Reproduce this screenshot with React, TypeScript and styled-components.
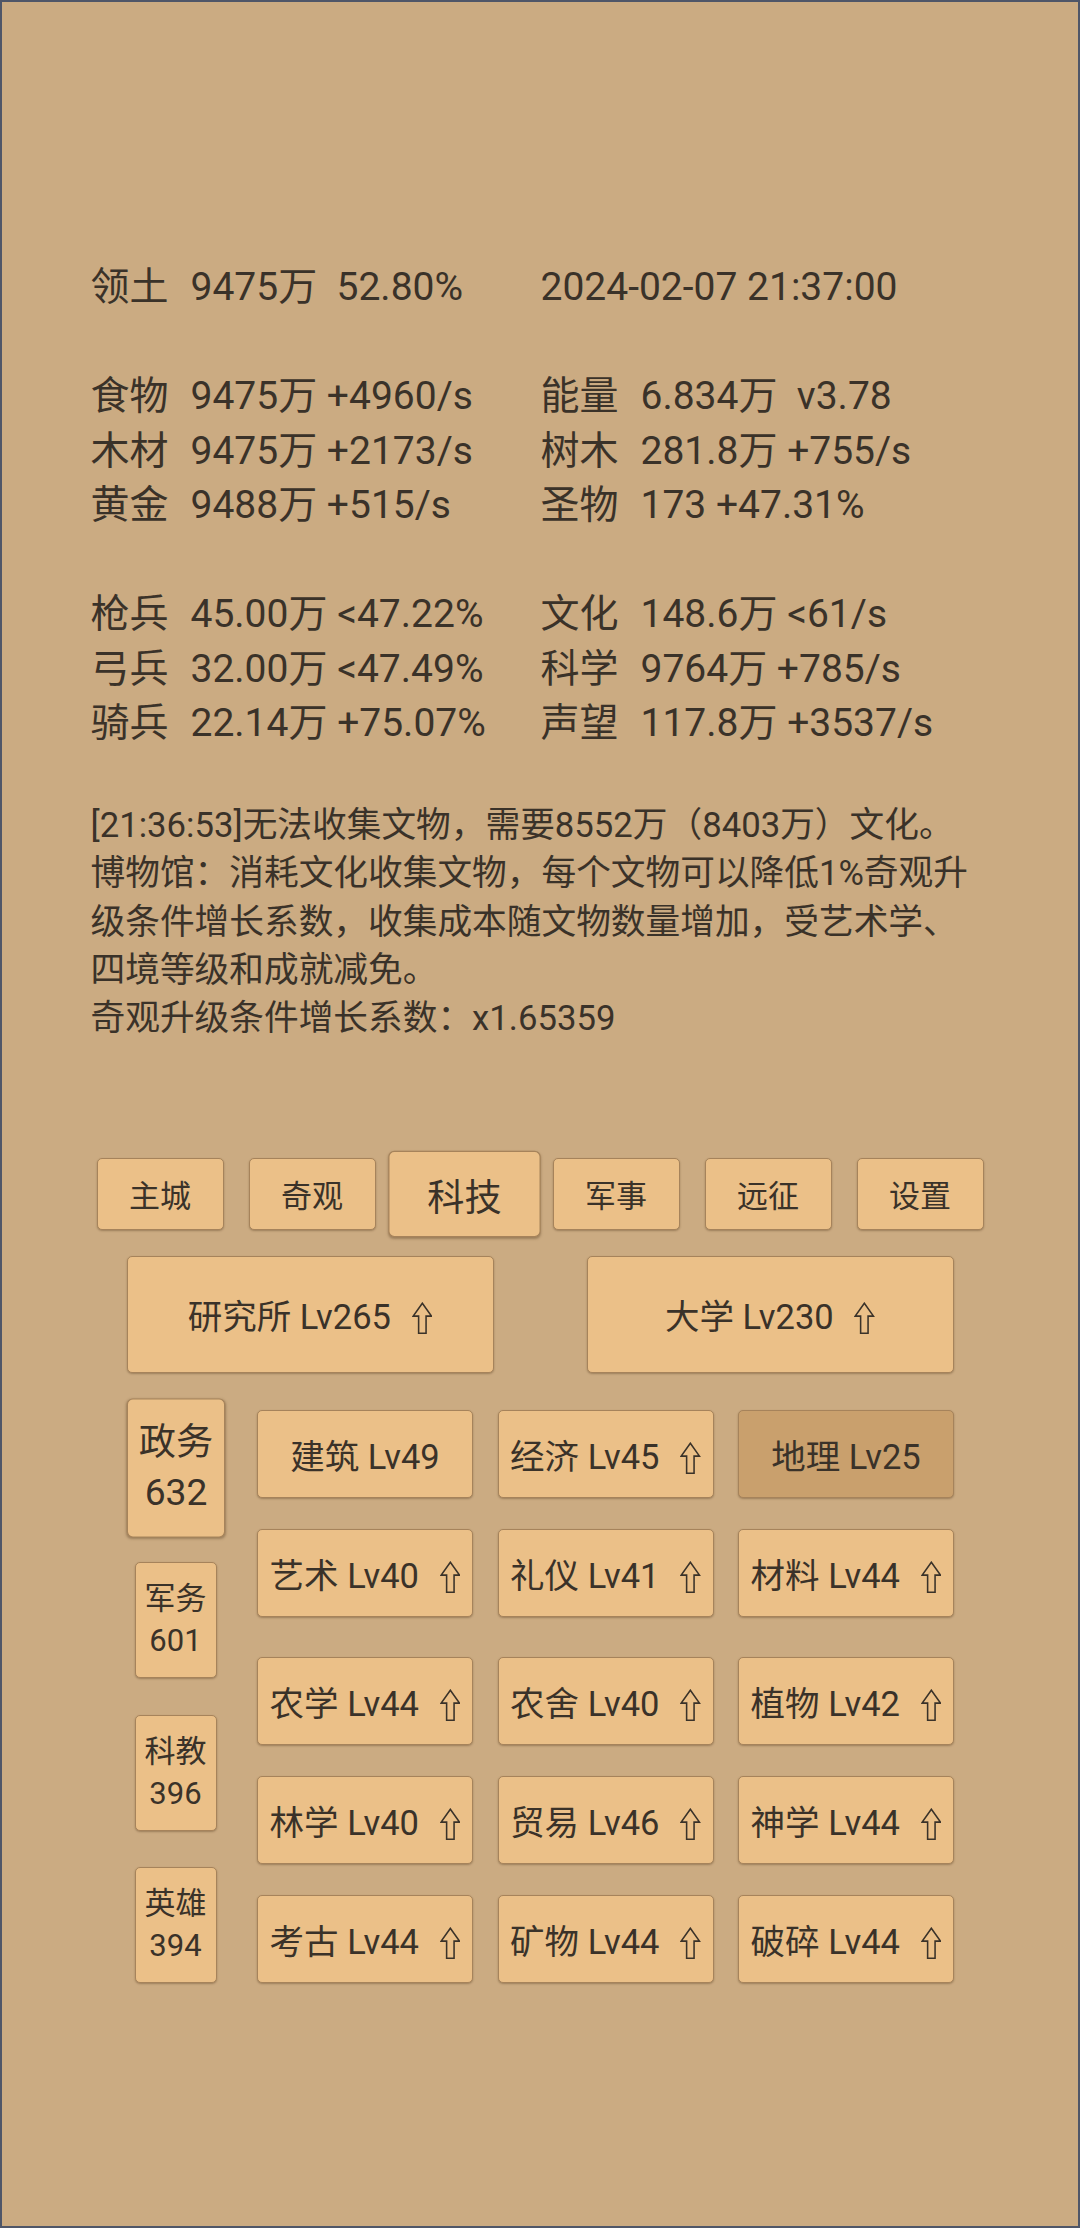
import React from "react";
import styled, { createGlobalStyle, css } from "styled-components";

const Global = createGlobalStyle`
  html, body { margin: 0; padding: 0; background: #cbab82; }
  body {
    font-family: Roboto, "Noto Sans CJK SC", sans-serif;
    color: #3a3229;
  }
  * { box-sizing: border-box; }
`;

const Page = styled.div`
  width: 1080px;
  height: 2228px;
  border: 2px solid #4f5668;
  background: #cbab82;
  padding-top: 258px;
  display: flex;
  flex-direction: column;
  overflow: hidden;
`;

const Stats = styled.div`
  padding-left: 88.5px;
  font-size: 39px;
  line-height: 54.5px;
`;

const StatLine = styled.div`
  display: grid;
  grid-template-columns: 450px auto;
  height: 54.5px;
  white-space: pre;
`;

const Cell = styled.div`
  display: flex;
`;

const StatLabel = styled.span`
  width: 100px;
  flex: none;
`;

const StatValue = styled.span``;

const Log = styled.div`
  margin-top: 50.5px;
  padding-left: 88.5px;
  width: 980px;
  font-size: 34.7px;
  line-height: 48.3px;
`;

const LogLine = styled.div``;

const buttonBase = css`
  background: #ebc088;
  border: 1px solid #a6835b;
  border-radius: 5px;
  box-shadow: 0 1px 2px rgba(70, 45, 20, 0.35);
  font-family: inherit;
  color: #3a3229;
  padding: 0;
  display: flex;
  align-items: center;
  justify-content: center;
  flex: none;
`;

const Nav = styled.div`
  margin-top: 115.5px;
  display: flex;
  justify-content: center;
  gap: 25px;
`;

const NavButton = styled.div<{ $active?: boolean }>`
  ${buttonBase};
  width: 127px;
  height: 72px;
  font-size: 31px;
  transform: ${(p) => (p.$active ? "scale(1.2)" : "none")};
`;

const BigRow = styled.div`
  margin-top: 26px;
  display: flex;
  justify-content: center;
  gap: 93px;
`;

const BigButton = styled.div`
  ${buttonBase};
  width: 367px;
  height: 117px;
  font-size: 34.5px;
`;

const TechArea = styled.div`
  margin-top: 37px;
  display: flex;
  justify-content: center;
  gap: 32px;
`;

const SideCol = styled.div`
  width: 99px;
  display: flex;
  flex-direction: column;
  align-items: center;
  gap: 36.3px;
`;

const SideButton = styled.div<{ $active?: boolean }>`
  ${buttonBase};
  width: 82px;
  height: 116px;
  flex-direction: column;
  font-size: 31px;
  line-height: 42px;
  transform: ${(p) => (p.$active ? "scale(1.2)" : "none")};
`;

const TechGrid = styled.div`
  display: flex;
  flex-direction: column;
  gap: 31px;
`;

const TechRow = styled.div<{ $extra?: number }>`
  display: grid;
  grid-template-columns: repeat(3, 216px);
  column-gap: 24.5px;
  margin-top: ${(p) => p.$extra ?? 0}px;
`;

const TechButton = styled.div<{ $dim?: boolean }>`
  ${buttonBase};
  width: 216px;
  height: 88px;
  font-size: 34.5px;
  background: ${(p) => (p.$dim ? "#c9a06d" : "#ebc088")};
`;

const BtnText = styled.span`
  white-space: nowrap;
`;

const ArrowSvg = styled.svg`
  height: 0.94em;
  width: 0.6em;
  vertical-align: -0.15em;
  margin-left: 0.6em;
`;

const UpArrow = () => (
  <ArrowSvg viewBox="0 0 20 31" fill="none">
    <path
      d="M10 1 L1.2 13.5 L6.4 13.5 L6.4 30 L13.6 30 L13.6 13.5 L18.8 13.5 Z"
      stroke="#3a3229"
      strokeWidth="1.5"
      strokeLinejoin="miter"
    />
  </ArrowSvg>
);

type Stat = { label?: string; value: string };
const statRows: ([Stat, Stat] | null)[] = [
  [{ label: "领土", value: "9475万  52.80%" }, { value: "2024-02-07 21:37:00" }],
  null,
  [{ label: "食物", value: "9475万 +4960/s" }, { label: "能量", value: "6.834万  v3.78" }],
  [{ label: "木材", value: "9475万 +2173/s" }, { label: "树木", value: "281.8万 +755/s" }],
  [{ label: "黄金", value: "9488万 +515/s" }, { label: "圣物", value: "173 +47.31%" }],
  null,
  [{ label: "枪兵", value: "45.00万 <47.22%" }, { label: "文化", value: "148.6万 <61/s" }],
  [{ label: "弓兵", value: "32.00万 <47.49%" }, { label: "科学", value: "9764万 +785/s" }],
  [{ label: "骑兵", value: "22.14万 +75.07%" }, { label: "声望", value: "117.8万 +3537/s" }],
];

const navItems = ["主城", "奇观", "科技", "军事", "远征", "设置"];

const sideItems = [
  { name: "政务", n: "632", active: true },
  { name: "军务", n: "601" },
  { name: "科教", n: "396" },
  { name: "英雄", n: "394" },
];

type Tech = { name: string; lv: number; up?: boolean; dim?: boolean };
const techRows: Tech[][] = [
  [
    { name: "建筑", lv: 49 },
    { name: "经济", lv: 45, up: true },
    { name: "地理", lv: 25, dim: true },
  ],
  [
    { name: "艺术", lv: 40, up: true },
    { name: "礼仪", lv: 41, up: true },
    { name: "材料", lv: 44, up: true },
  ],
  [
    { name: "农学", lv: 44, up: true },
    { name: "农舍", lv: 40, up: true },
    { name: "植物", lv: 42, up: true },
  ],
  [
    { name: "林学", lv: 40, up: true },
    { name: "贸易", lv: 46, up: true },
    { name: "神学", lv: 44, up: true },
  ],
  [
    { name: "考古", lv: 44, up: true },
    { name: "矿物", lv: 44, up: true },
    { name: "破碎", lv: 44, up: true },
  ],
];

const StatCell = ({ s }: { s: Stat }) => (
  <Cell>
    {s.label && <StatLabel>{s.label}</StatLabel>}
    <StatValue>{s.value}</StatValue>
  </Cell>
);

export default function App() {
  return (
    <>
      <Global />
      <Page>
        <Stats>
          {statRows.map((row, i) => (
            <StatLine key={i}>
              {row && (
                <>
                  <StatCell s={row[0]} />
                  <StatCell s={row[1]} />
                </>
              )}
            </StatLine>
          ))}
        </Stats>

        <Log>
          <LogLine>[21:36:53]无法收集文物，需要8552万（8403万）文化。</LogLine>
          <LogLine>
            博物馆：消耗文化收集文物，每个文物可以降低1%奇观升级条件增长系数，收集成本随文物数量增加，受艺术学、四境等级和成就减免。
          </LogLine>
          <LogLine>奇观升级条件增长系数：x1.65359</LogLine>
        </Log>

        <Nav>
          {navItems.map((n) => (
            <NavButton key={n} $active={n === "科技"}>
              {n}
            </NavButton>
          ))}
        </Nav>

        <BigRow>
          <BigButton>
            <BtnText>
              研究所 Lv265
              <UpArrow />
            </BtnText>
          </BigButton>
          <BigButton>
            <BtnText>
              大学 Lv230
              <UpArrow />
            </BtnText>
          </BigButton>
        </BigRow>

        <TechArea>
          <SideCol>
            {sideItems.map((s) => (
              <SideButton key={s.name} $active={s.active}>
                <span>{s.name}</span>
                <span>{s.n}</span>
              </SideButton>
            ))}
          </SideCol>
          <TechGrid>
            {techRows.map((row, i) => (
              <TechRow key={i} $extra={i === 2 ? 9 : 0}>
                {row.map((t) => (
                  <TechButton key={t.name} $dim={t.dim}>
                    <BtnText>
                      {t.name} Lv{t.lv}
                      {t.up && <UpArrow />}
                    </BtnText>
                  </TechButton>
                ))}
              </TechRow>
            ))}
          </TechGrid>
        </TechArea>
      </Page>
    </>
  );
}
